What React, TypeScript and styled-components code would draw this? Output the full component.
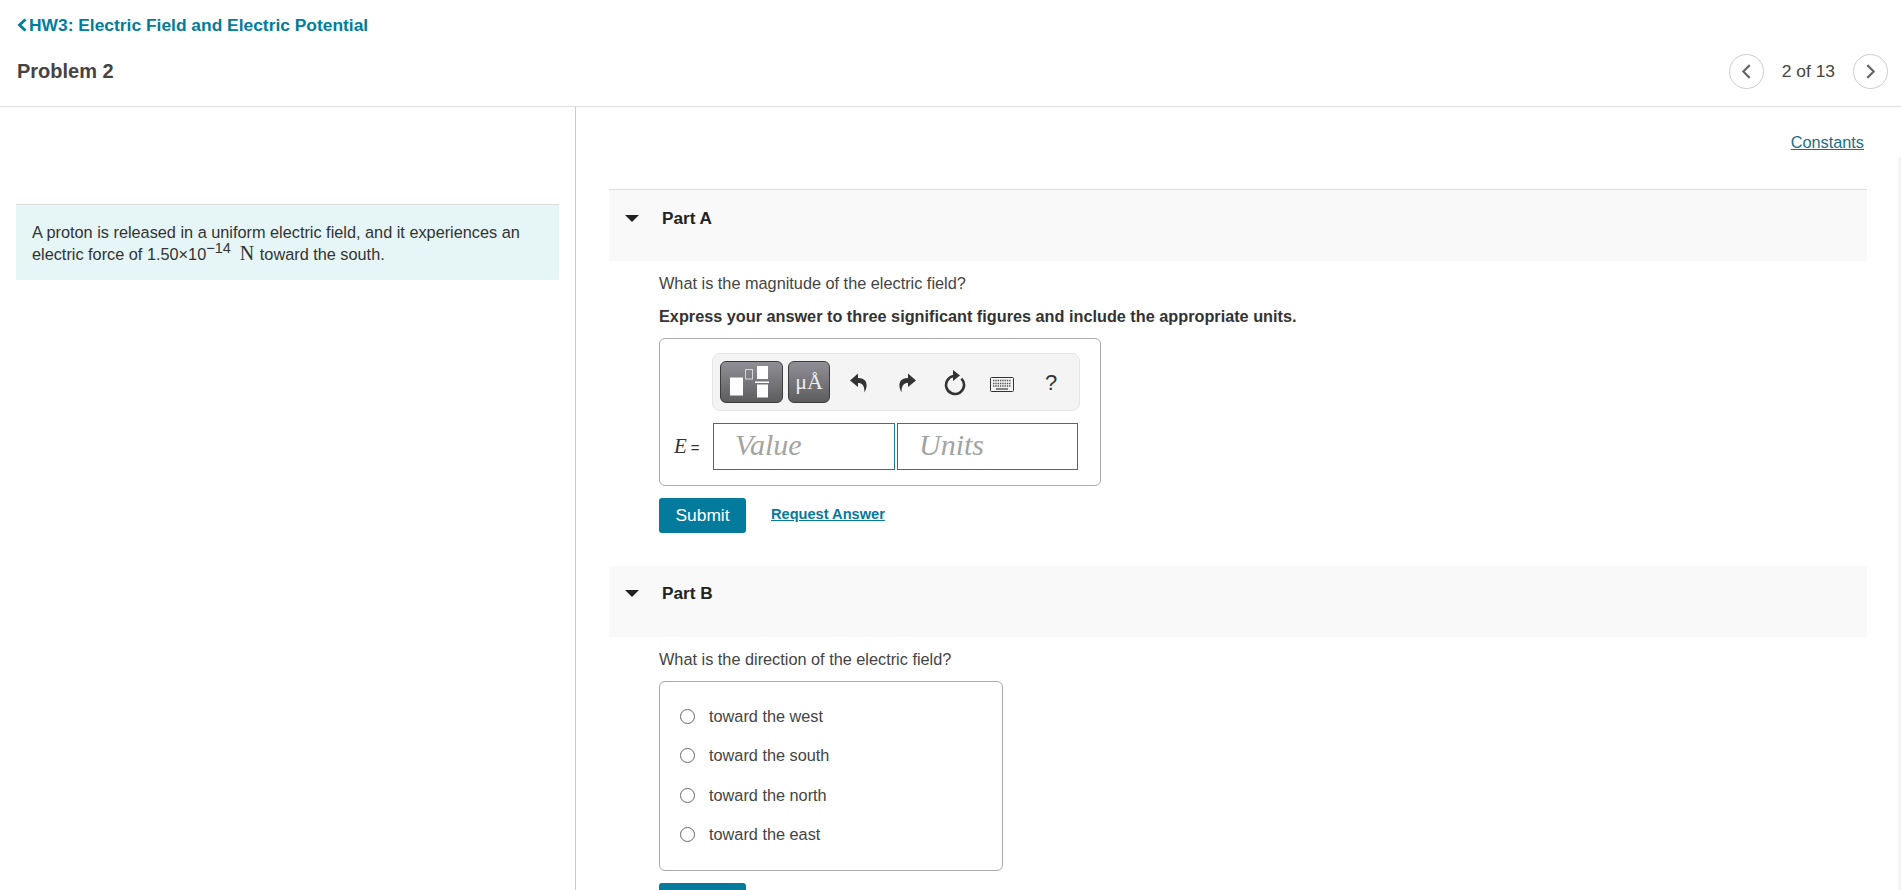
import React from 'react';
import styled, { createGlobalStyle } from 'styled-components';

const Global = createGlobalStyle`
  html, body { margin: 0; padding: 0; height: 890px; overflow: hidden; background: #fff; }
  body { font-family: "Liberation Sans", Arial, sans-serif; color: #333; }
  * { box-sizing: border-box; }
`;

const Page = styled.div`
  width: 1901px;
  height: 890px;
  overflow: hidden;
  display: flex;
  flex-direction: column;
`;
const Header = styled.header`
  height: 107px;
  flex: none;
  border-bottom: 1px solid #ddd;
  padding: 14px 13px 0 17px;
`;
const Crumb = styled.a`
  display: flex;
  align-items: center;
  gap: 2px;
  height: 22px;
  font-size: 17.4px;
  font-weight: 700;
  color: #007c9c;
`;
const TitleRow = styled.div`
  display: flex;
  align-items: center;
  justify-content: space-between;
  height: 36px;
  margin-top: 17px;
`;
const Title = styled.h1`
  margin: 0;
  font-size: 20px;
  font-weight: 700;
  color: #444;
`;
const Pager = styled.div`
  display: flex;
  align-items: center;
  gap: 18px;
  font-size: 17.4px;
  color: #444;
`;
const RoundBtn = styled.button`
  width: 35px;
  height: 35px;
  padding: 0;
  border: 1px solid #ccc;
  border-radius: 50%;
  background: #fff;
  display: flex;
  align-items: center;
  justify-content: center;
`;
const Columns = styled.div`
  flex: 1;
  display: flex;
  min-height: 0;
`;
const Left = styled.aside`
  width: 576px;
  flex: none;
  border-right: 1px solid #bcd0e5;
  padding: 97px 16px 0 16px;
`;
const Intro = styled.div`
  height: 76px;
  width: 543px;
  background: #e6f5f6;
  border-top: 1px solid #ddd;
  padding: 16px 16px 0;
  font-size: 16.3px;
  line-height: 22px;
  color: #333;
`;
const Sup = styled.sup`
  font-size: 14.5px;
  line-height: 0;
  vertical-align: 7px;
`;
const MathN = styled.span`
  font-family: "Liberation Serif", serif;
  font-size: 20px;
  line-height: 0;
  margin-left: 9px;
  margin-right: 1px;
`;
const Right = styled.main`
  flex: 1;
  min-width: 0;
  padding: 0 34px 0 33px;
  position: relative;
`;
const EdgeLine = styled.div`
  position: absolute;
  top: 50px;
  right: 0;
  bottom: 0;
  width: 3px;
  background: #f4f4f4;
`;
const ConstantsRow = styled.div`
  height: 82px;
  display: flex;
  justify-content: flex-end;
  padding: 26px 3px 0 0;
`;
const Constants = styled.a`
  font-size: 16.3px;
  height: 19px;
  line-height: 19px;
  color: #1a6f8a;
  text-decoration: underline;
`;
const PartBar = styled.div<{ $first?: boolean }>`
  height: ${p => (p.$first ? 72 : 71)}px;
  background: #f9f9f9;
  border-top: ${p => (p.$first ? '1px solid #ddd' : 'none')};
  display: flex;
  align-items: flex-start;
  padding-top: ${p => (p.$first ? 19 : 18)}px;
  padding-left: 16px;
  font-weight: 700;
  font-size: 17.2px;
  line-height: 19px;
  color: #222;
`;
const Caret = styled.span`
  width: 0;
  height: 0;
  margin-top: 6px;
  border-left: 7px solid transparent;
  border-right: 7px solid transparent;
  border-top: 7px solid #222;
  margin-right: 23px;
`;
const Body = styled.section`
  padding-left: 50px;
`;
const Question = styled.p`
  margin: 13px 0 0;
  font-size: 16.3px;
  line-height: 19px;
  color: #444;
`;
const Instruction = styled.p`
  margin: 14px 0 0;
  font-size: 16.26px;
  line-height: 19px;
  font-weight: 700;
  color: #333;
`;
const AnswerPanel = styled.div`
  width: 442px;
  height: 148px;
  margin-top: 12px;
  border: 1px solid #aaa;
  border-radius: 6px;
  padding: 14px 0 0 52px;
`;
const Toolbar = styled.div`
  width: 368px;
  height: 58px;
  background: #f4f4f4;
  border: 1px solid #e4e4e4;
  border-radius: 8px;
  display: flex;
  align-items: center;
  padding-left: 7px;
`;
const ToolButton = styled.button<{ $wide?: boolean }>`
  width: ${p => (p.$wide ? 63 : 42)}px;
  height: 42px;
  margin-right: 5px;
  padding: 0;
  border: 1px solid #3c3c3c;
  border-radius: 6px;
  background: linear-gradient(#918f96, #5d5d5f);
  display: flex;
  align-items: center;
  justify-content: center;
  color: #f0f0f0;
  font-family: "Liberation Serif", serif;
  font-size: 22px;
`;
const ToolIcon = styled.span<{ $w: number }>`
  width: ${p => p.$w}px;
  display: flex;
  align-items: center;
  justify-content: center;
  color: #333;
  font-size: 22px;
  margin-top: 1px;
`;
const InputRow = styled.div`
  display: flex;
  align-items: center;
  margin-top: 12px;
  margin-left: -38px;
`;
const Symbol = styled.span`
  width: 39px;
  font-family: "Liberation Serif", serif;
  font-style: italic;
  font-size: 21px;
  color: #333;
`;
const Equals = styled.span`
  font-family: "Liberation Sans", sans-serif;
  font-style: normal;
  font-size: 15px;
  margin-left: 4px;
`;
const Field = styled.input<{ $units?: boolean }>`
  width: ${p => (p.$units ? 181 : 182)}px;
  height: 47px;
  margin-left: ${p => (p.$units ? 2 : 0)}px;
  border: 1px solid #1b7c9c;
  border-radius: 0;
  padding: 0 0 3px 21px;
  font-family: "Liberation Serif", serif;
  font-style: italic;
  font-size: 30px;
  background: #fff;
  &::placeholder { color: #a3a3a3; opacity: 1; }
`;
const Actions = styled.div`
  display: flex;
  align-items: center;
  gap: 25px;
  margin-top: 12px;
  margin-bottom: 33px;
`;
const Submit = styled.button`
  width: 87px;
  height: 35px;
  padding: 0;
  border: none;
  border-radius: 3px;
  background: #047a9c;
  color: #fff;
  font-family: "Liberation Sans", sans-serif;
  font-size: 17.4px;
  font-weight: 400;
`;
const RequestLink = styled.a`
  font-size: 14.6px;
  font-weight: 700;
  color: #047a9c;
  text-decoration: underline;
  padding-bottom: 3px;
`;
const OptionPanel = styled.div`
  width: 344px;
  height: 190px;
  margin-top: 12px;
  border: 1px solid #aaa;
  border-radius: 6px;
  padding: 15px 0 0 20px;
`;
const Option = styled.label`
  display: flex;
  align-items: center;
  height: 39.3px;
  gap: 7px;
  font-size: 16.3px;
  color: #444;
`;
const RadioMark = styled.span`
  width: 15px;
  height: 15px;
  border: 1.5px solid #666;
  border-radius: 50%;
  background: #fff;
  margin-right: 7px;
  flex: none;
`;

const Chevron = ({ dir }: { dir: 'left' | 'right' }) => (
  <svg width="17" height="17" viewBox="0 0 16 16" fill="none" aria-hidden>
    <path d={dir === 'left' ? 'M11 2 L5 8 L11 14' : 'M5 2 L11 8 L5 14'} stroke="#666" strokeWidth="2" />
  </svg>
);

const BackChevron = () => (
  <svg width="10" height="14" viewBox="0 0 10 14" fill="none" aria-hidden>
    <path d="M8.5 1.5 L2.5 7 L8.5 12.5" stroke="#007c9c" strokeWidth="2.8" />
  </svg>
);

const TemplateIcon = () => (
  <svg width="45" height="33" viewBox="0 0 45 33" aria-hidden>
    <rect x="1" y="11.5" width="13" height="18" fill="#fff" />
    <rect x="16.5" y="3.5" width="7" height="9.5" fill="none" stroke="#d6d6d6" strokeWidth="1" />
    <rect x="28" y="0" width="11" height="13" fill="#fff" />
    <rect x="26" y="15.5" width="14" height="1.5" fill="#fff" />
    <rect x="28" y="18.5" width="11" height="13" fill="#fff" />
  </svg>
);

const UNDO_PATH = 'M8 0.5 L0 7.5 L8 14 V10 C12 10 14.5 12 14.5 19.5 C18.5 12 17 5 8 5 Z';

const UndoIcon = () => (
  <svg width="18" height="20" viewBox="0 0 18 20" aria-hidden>
    <path d={UNDO_PATH} fill="#333" />
  </svg>
);

const RedoIcon = () => (
  <svg width="18" height="20" viewBox="0 0 18 20" aria-hidden>
    <g transform="translate(18 0) scale(-1 1)">
      <path d={UNDO_PATH} fill="#333" />
    </g>
  </svg>
);

const ResetIcon = () => (
  <svg width="24" height="26" viewBox="0 0 24 26" aria-hidden>
    <path d="M18.4 8.6 A9 9 0 1 1 11 6.05" fill="none" stroke="#333" strokeWidth="2.6" />
    <path d="M10 0 L17 5.5 L10 11 Z" fill="#333" />
  </svg>
);

const KeyboardIcon = () => (
  <svg width="24" height="19" viewBox="0 -4 24 19" aria-hidden>
    <rect x="0.5" y="0.5" width="23" height="14" rx="1" fill="#f4f4f4" stroke="#333" />
    <path d="M3 3.5H21M3 6.5H21M3 9H21" stroke="#555" strokeWidth="1.3" strokeDasharray="1.4 0.9" />
    <path d="M6 12H18" stroke="#444" strokeWidth="1.3" />
  </svg>
);

export default function App() {
  const options = ['toward the west', 'toward the south', 'toward the north', 'toward the east'];
  return (
    <Page>
      <Global />
      <Header>
        <Crumb>
          <BackChevron />
          HW3: Electric Field and Electric Potential
        </Crumb>
        <TitleRow>
          <Title>Problem 2</Title>
          <Pager>
            <RoundBtn aria-label="Previous"><Chevron dir="left" /></RoundBtn>
            <span>2 of 13</span>
            <RoundBtn aria-label="Next"><Chevron dir="right" /></RoundBtn>
          </Pager>
        </TitleRow>
      </Header>
      <Columns>
        <Left>
          <Intro>
            A proton is released in a uniform electric field, and it experiences an electric force of 1.50×10<Sup>−14</Sup>
            <MathN>N</MathN> toward the south.
          </Intro>
        </Left>
        <Right>
          <EdgeLine />
          <ConstantsRow><Constants>Constants</Constants></ConstantsRow>
          <PartBar $first><Caret />Part A</PartBar>
          <Body>
            <Question>What is the magnitude of the electric field?</Question>
            <Instruction>Express your answer to three significant figures and include the appropriate units.</Instruction>
            <AnswerPanel>
              <Toolbar>
                <ToolButton $wide aria-label="Templates"><TemplateIcon /></ToolButton>
                <ToolButton aria-label="Units">μÅ</ToolButton>
                <ToolIcon $w={48}><UndoIcon /></ToolIcon>
                <ToolIcon $w={48}><RedoIcon /></ToolIcon>
                <ToolIcon $w={47}><ResetIcon /></ToolIcon>
                <ToolIcon $w={48}><KeyboardIcon /></ToolIcon>
                <ToolIcon $w={50}>?</ToolIcon>
              </Toolbar>
              <InputRow>
                <Symbol>E<Equals>=</Equals></Symbol>
                <Field placeholder="Value" readOnly />
                <Field $units placeholder="Units" readOnly />
              </InputRow>
            </AnswerPanel>
            <Actions>
              <Submit>Submit</Submit>
              <RequestLink>Request Answer</RequestLink>
            </Actions>
          </Body>
          <PartBar><Caret />Part B</PartBar>
          <Body>
            <Question>What is the direction of the electric field?</Question>
            <OptionPanel>
              {options.map(o => (
                <Option key={o}><RadioMark />{o}</Option>
              ))}
            </OptionPanel>
            <Actions><Submit>Submit</Submit></Actions>
          </Body>
        </Right>
      </Columns>
    </Page>
  );
}
